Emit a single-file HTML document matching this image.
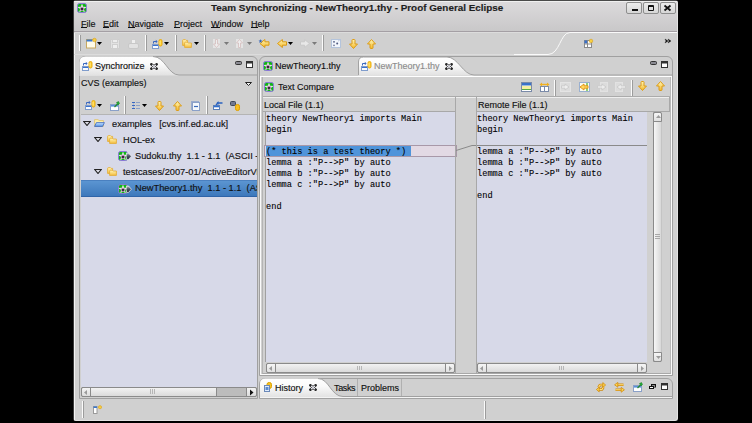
<!DOCTYPE html>
<html><head><meta charset="utf-8">
<style>
*{margin:0;padding:0;box-sizing:border-box}
html,body{width:752px;height:423px;overflow:hidden;background:#000}
body{position:relative;font-family:"Liberation Sans",sans-serif;font-size:9px;color:#111}
.a{position:absolute}
.t{position:absolute;white-space:pre;line-height:12px;-webkit-text-stroke:0.15px currentColor}
.u{position:relative}
.u:after{content:"";position:absolute;left:0;right:0;top:8px;height:1px;background:#111}
.lav{background:#d7d9e8}
.mono{position:absolute;font-family:"Liberation Mono",monospace;font-size:8.67px;line-height:11px;white-space:pre;color:#000;-webkit-text-stroke:0.1px #000}
.sv{position:absolute;width:2px;background:linear-gradient(90deg,#fbfbfb 0,#fbfbfb 1px,#9c9c9c 1px)}
svg.i{position:absolute;overflow:visible}
.hl{position:absolute;height:1px}
.vl{position:absolute;width:1px}
</style></head><body>
<svg width="0" height="0" style="position:absolute">
<defs>
<linearGradient id="gy" x1="0" y1="0" x2="0" y2="1"><stop offset="0" stop-color="#fff7b8"/><stop offset="1" stop-color="#f4b82a"/></linearGradient>
<linearGradient id="gyh" x1="0" y1="0" x2="1" y2="0"><stop offset="0" stop-color="#fff7b8"/><stop offset="1" stop-color="#f4b82a"/></linearGradient>
<linearGradient id="gf" x1="0" y1="0" x2="0" y2="1"><stop offset="0" stop-color="#fff4b8"/><stop offset="1" stop-color="#f6c040"/></linearGradient>
<radialGradient id="gstar" cx="0.5" cy="0.62" r="0.5"><stop offset="0" stop-color="#000"/><stop offset="0.14" stop-color="#301830"/><stop offset="0.4" stop-color="#c0a8c0"/><stop offset="0.7" stop-color="#f4e8f4"/><stop offset="1" stop-color="#fff"/></radialGradient>
<linearGradient id="gbl" x1="0" y1="0" x2="0" y2="1"><stop offset="0" stop-color="#c8e2ff"/><stop offset="1" stop-color="#5a98e8"/></linearGradient>
<linearGradient id="gdia" x1="0" y1="0" x2="0" y2="1"><stop offset="0" stop-color="#b8bcc8"/><stop offset="0.45" stop-color="#505868"/><stop offset="1" stop-color="#1c2030"/></linearGradient>
<linearGradient id="gtab" x1="0" y1="0" x2="0" y2="1"><stop offset="0" stop-color="#ffffff"/><stop offset="0.4" stop-color="#fafafa"/><stop offset="1" stop-color="#e0e0e0"/></linearGradient>
<symbol id="thy" viewBox="0 0 10 10"><rect x="0.5" y="0.5" width="9" height="9" rx="2" fill="#12b418" stroke="#8a78d8"/><path d="M5.00 0.70 L6.18 3.78 L9.47 3.95 L6.90 6.02 L7.76 9.20 L5.00 7.40 L2.24 9.20 L3.10 6.02 L0.53 3.95 L3.82 3.78Z" fill="url(#gstar)"/></symbol>
<symbol id="adn" viewBox="0 0 9 10"><path d="M3 1.2 Q3 0.5 3.7 0.5 H5.3 Q6 0.5 6 1.2 V5 H8.5 L4.5 9.5 L0.5 5 H3Z" fill="url(#gy)" stroke="#dc9c18" stroke-linejoin="round"/></symbol>
<symbol id="aup" viewBox="0 0 9 10"><path d="M3 8.8 Q3 9.5 3.7 9.5 H5.3 Q6 9.5 6 8.8 V5 H8.5 L4.5 0.5 L0.5 5 H3Z" fill="url(#gy)" stroke="#dc9c18" stroke-linejoin="round"/></symbol>
<symbol id="alf" viewBox="0 0 10 9"><path d="M9.5 2.8 V6.2 H5.4 V8.5 L0.5 4.5 L5.4 0.5 V2.8Z" fill="url(#gy)" stroke="#d99a16"/></symbol>
<symbol id="art" viewBox="0 0 10 9"><path d="M0.5 2.8 V6.2 H4.6 V8.5 L9.5 4.5 L4.6 0.5 V2.8Z" fill="#e8e8e8" stroke="#c9c9c9"/></symbol>
<symbol id="dd" viewBox="0 0 5 3"><path d="M0 0 H5 L2.5 3Z" fill="#000"/></symbol>
<symbol id="ddg" viewBox="0 0 5 3"><path d="M0 0 H5 L2.5 3Z" fill="#7a7a7a"/></symbol>
<symbol id="sync" viewBox="0 0 11 10"><path d="M1.5 4.5 V2.5 H4" fill="none" stroke="#3a68c0" stroke-width="1"/><path d="M3.8 0.8 L5.6 2.5 L3.8 4.2Z" fill="#3a68c0"/><rect x="0.5" y="5.5" width="6" height="4" fill="#fafcff" stroke="#7f9ccc"/><rect x="1" y="6" width="5" height="1" fill="#3a72d0"/><rect x="7" y="0.5" width="3" height="6.5" rx="1.4" fill="#ffd23a" stroke="#e8a400" stroke-width="0.9"/><path d="M8 2 V5.5" stroke="#fff6b0" stroke-width="0.7"/></symbol>
<symbol id="xcl" viewBox="0 0 8 7"><path d="M1.3 1.3 L6.7 5.7 M6.7 1.3 L1.3 5.7" stroke="#262626" stroke-width="2.5" stroke-linecap="round"/><path d="M2.4 2.2 L5.6 4.8 M5.6 2.2 L2.4 4.8" stroke="#f2f2fa" stroke-width="1.2" stroke-linecap="round"/></symbol>
<symbol id="vmin" viewBox="0 0 7 4"><rect x="0.5" y="0.5" width="6" height="3" rx="1" fill="#8a8a92" stroke="#333"/></symbol>
<symbol id="vmax" viewBox="0 0 7 7"><rect x="0.5" y="0.5" width="6" height="6" fill="#fff" stroke="#333"/><rect x="0.5" y="0.5" width="6" height="2" fill="#333"/></symbol>
<symbol id="tri" viewBox="0 0 8 5"><path d="M0.8 0.5 H7.2 L4 4.5Z" fill="#dcdce6" stroke="#222" stroke-width="1.1"/></symbol>
<symbol id="fold" viewBox="0 0 10 9"><path d="M0.6 1.6 Q0.6 0.6 1.6 0.6 H3.4 L4.2 1.4 H5.6 V6.4 H0.6Z" fill="url(#gf)" stroke="#e2aa30" stroke-width="0.8"/><path d="M2.6 4.2 Q2.6 3.2 3.6 3.2 H5.4 L6.2 4 H9.4 V8.4 H2.6Z" fill="url(#gf)" stroke="#e2aa30" stroke-width="0.8"/></symbol>
<symbol id="fopen" viewBox="0 0 11 8"><path d="M0.6 0.6 H4 L5 1.5 H9.4 V7.4 H0.6Z" fill="#fff0a8" stroke="#dcc070" stroke-width="0.8"/><path d="M0.6 7.4 L2.4 3.6 H10.4 L8.6 7.4Z" fill="url(#gbl)" stroke="#3a64c0" stroke-width="0.8"/></symbol>
<symbol id="thyx" viewBox="0 0 14 10"><rect x="0.5" y="0.5" width="9" height="9" rx="2" fill="#12b418" stroke="#8a78d8"/><path d="M5.00 0.70 L6.18 3.78 L9.47 3.95 L6.90 6.02 L7.76 9.20 L5.00 7.40 L2.24 9.20 L3.10 6.02 L0.53 3.95 L3.82 3.78Z" fill="url(#gstar)"/><path d="M8.6 2 H10.6 L13.4 5.2 L10.6 8.4 H8.6 Q7.6 5.2 8.6 2Z" fill="url(#gdia)" stroke="#f4f4f8" stroke-width="0.7"/></symbol>
</defs></svg>

<!-- window -->
<div class="a" style="left:73px;top:0;width:605px;height:421px;background:#d0d0d0;border-top:1px solid #4a4a4a;border-left:1px solid #3c3c3c;border-right:1px solid #e2e2e2;border-bottom:1px solid #e2e2e2;border-radius:3px"></div>
<div class="vl" style="left:74px;top:2px;height:418px;background:#f4f4f4"></div>
<!-- title bar -->
<div class="a" style="left:74px;top:1px;width:603px;height:30px;background:linear-gradient(#dcdadc,#c9c8c9)"></div><div class="hl" style="left:74px;top:1px;width:603px;background:#f0f0f0"></div>
<svg class="i" style="left:77px;top:3px" width="10" height="10"><use href="#thy"/></svg>
<div class="t" style="left:211px;top:2px;font-weight:bold;font-size:9.9px;color:#1e1e1e">Team Synchronizing - NewTheory1.thy - Proof General Eclipse</div>
<div class="a" style="left:626px;top:2px;width:16px;height:12px;border:1px solid #8e8e8e;border-radius:2px;background:linear-gradient(#ececec,#d6d6d6)"></div>
<div class="a" style="left:643px;top:2px;width:16px;height:12px;border:1px solid #8e8e8e;border-radius:2px;background:linear-gradient(#ececec,#d6d6d6)"></div>
<div class="a" style="left:660px;top:2px;width:16px;height:12px;border:1px solid #8e8e8e;border-radius:2px;background:linear-gradient(#ececec,#d6d6d6)"></div>
<div class="a" style="left:632px;top:9px;width:6px;height:2px;background:#111"></div>
<div class="a" style="left:648px;top:5px;width:6px;height:6px;border:1px solid #111;border-top-width:2px;border-radius:1px"></div>
<svg class="i" style="left:664px;top:5px" width="7" height="6"><path d="M0.5 0.5 L6.5 5.5 M6.5 0.5 L0.5 5.5" stroke="#111" stroke-width="1.8"/></svg>
<!-- menu -->

<div class="hl" style="left:74px;top:31px;width:603px;background:#a49fa4"></div>
<div class="hl" style="left:74px;top:32px;width:603px;background:#dcdcdc"></div>
<div class="t" style="left:81px;top:18px"><span class="u">F</span>ile</div>
<div class="t" style="left:103px;top:18px"><span class="u">E</span>dit</div>
<div class="t" style="left:128px;top:18px"><span class="u">N</span>avigate</div>
<div class="t" style="left:174px;top:18px"><span class="u">P</span>roject</div>
<div class="t" style="left:211px;top:18px"><span class="u">W</span>indow</div>
<div class="t" style="left:251px;top:18px"><span class="u">H</span>elp</div>

<!-- toolbar -->
<div class="sv" style="left:79px;top:35px;height:16px"></div>
<div class="sv" style="left:145px;top:35px;height:16px"></div>
<div class="sv" style="left:175px;top:35px;height:16px"></div>
<div class="sv" style="left:204px;top:35px;height:16px"></div>
<div class="sv" style="left:322px;top:35px;height:16px"></div>
<svg class="i" style="left:86px;top:38px" width="11" height="11"><rect x="0.5" y="1.5" width="9" height="8.5" fill="#fffbe8" stroke="#c8a860"/><rect x="0.5" y="1.5" width="6" height="2" fill="#3a78d0"/><circle cx="8.5" cy="2" r="1.8" fill="#f8d040" stroke="#d8a020" stroke-width="0.6"/></svg>
<svg class="i" style="left:97px;top:42px" width="5" height="3"><use href="#dd"/></svg>
<svg class="i" style="left:110px;top:39px" width="10" height="10"><rect x="0.5" y="0.5" width="9" height="9" rx="1" fill="#e2e2e2" stroke="#cbcbcb"/><rect x="2.5" y="0.5" width="5" height="3" fill="#ededed" stroke="#cfcfcf"/><rect x="2.5" y="5.5" width="5" height="4" fill="#efefef" stroke="#cfcfcf"/></svg>
<svg class="i" style="left:128px;top:39px" width="11" height="10"><rect x="3.5" y="0.5" width="4" height="4" fill="#efefef" stroke="#cfcfcf"/><rect x="0.5" y="4.5" width="10" height="5" rx="1.5" fill="#e2e2e2" stroke="#c8c8c8"/></svg>
<svg class="i" style="left:152px;top:39px" width="11" height="10"><use href="#sync"/></svg>
<svg class="i" style="left:164px;top:42px" width="5" height="3"><use href="#dd"/></svg>
<svg class="i" style="left:182px;top:39px" width="10" height="9"><use href="#fold"/></svg>
<svg class="i" style="left:194px;top:42px" width="5" height="3"><use href="#dd"/></svg>
<svg class="i" style="left:212px;top:38px" width="9" height="11"><rect x="0.5" y="0.5" width="8" height="10" fill="#e4e4e4" stroke="#d0d0d0"/><path d="M3.5 1.5 V6 H1.5 L4.5 9.5 L7.5 6 H5.5 V1.5Z" fill="#eee" stroke="#d2b8b8" stroke-width="0.7"/></svg>
<svg class="i" style="left:224px;top:42px" width="5" height="3"><use href="#ddg"/></svg>
<svg class="i" style="left:235px;top:38px" width="9" height="11"><rect x="0.5" y="0.5" width="8" height="10" fill="#e4e4e4" stroke="#d0d0d0"/><path d="M3.5 9.5 V5 H1.5 L4.5 1.5 L7.5 5 H5.5 V9.5Z" fill="#eee" stroke="#d2b8b8" stroke-width="0.7"/></svg>
<svg class="i" style="left:247px;top:42px" width="5" height="3"><use href="#ddg"/></svg>
<svg class="i" style="left:259px;top:39px" width="11" height="9"><use href="#alf"/><path d="M1.5 0 L2 1.5 L3.5 1.5 L2.3 2.5 L2.8 4 L1.5 3 L0.2 4 L0.7 2.5 L-0.5 1.5 L1 1.5Z" fill="#2c5fb8"/></svg>
<svg class="i" style="left:277px;top:39px" width="10" height="9"><use href="#alf"/></svg>
<svg class="i" style="left:288px;top:42px" width="5" height="3"><use href="#dd"/></svg>
<svg class="i" style="left:300px;top:39px" width="10" height="9"><use href="#art"/></svg>
<svg class="i" style="left:312px;top:42px" width="5" height="3"><use href="#ddg"/></svg>
<svg class="i" style="left:331px;top:39px" width="10" height="9"><rect x="0.5" y="0.5" width="9" height="8" fill="#f2f6fc" stroke="#b4c4dc"/><circle cx="3" cy="2.8" r="0.9" fill="#505a80"/><circle cx="6.2" cy="4.6" r="1" fill="#505a80"/><circle cx="3" cy="6.4" r="0.8" fill="#6a7090"/><path d="M7 2 L8.5 1.5" stroke="#9aa8c8" stroke-width="0.6"/></svg>
<svg class="i" style="left:349px;top:39px" width="9" height="10"><use href="#adn"/></svg>
<svg class="i" style="left:367px;top:39px" width="9" height="10"><use href="#aup"/></svg>

<div class="hl" style="left:74px;top:54px;width:440px;background:#dcdcdc"></div><svg class="i" style="left:514px;top:31px" width="163" height="25"><path d="M0 23.5 H34 C46 23.5 46 1.5 56 1.5 H163" fill="none" stroke="#fafafa" stroke-width="1"/></svg>
<svg class="i" style="left:584px;top:39px" width="9" height="9"><rect x="0.5" y="1.5" width="7" height="7" fill="#fff" stroke="#8a8a8a"/><rect x="0.5" y="1.5" width="3" height="3" fill="#3a70c8"/><path d="M0.5 5 H7.5 M3.5 1.5 V8.5" stroke="#8a8a8a"/><circle cx="7" cy="2" r="1.8" fill="#f8d040" stroke="#d8a020" stroke-width="0.6"/></svg>
<svg class="i" style="left:665px;top:39px" width="6" height="5"><path d="M0 0 L3 2 L0 4 L1 2Z M3 0 L6 2 L3 4 L4 2Z" fill="#111" stroke="#111" stroke-width="0.4"/></svg>

<div class="a" style="left:79px;top:56px;width:179px;height:343px;border:1px solid #a0a0a0;border-radius:6px 6px 0 0;background:#d0d0d0"></div>
<svg class="i" style="left:79px;top:56px" width="179" height="21"><path d="M0.5 20 V6.5 Q0.5 0.5 6.5 0.5 H74 C86 0.5 89 19 100 19 H179" fill="url(#gtab)" stroke="none"/><path d="M74 0.5 C86 0.5 89 19 100 19 H178" fill="none" stroke="#a0a0a0"/></svg>
<svg class="i" style="left:82px;top:61px" width="11" height="10"><use href="#sync"/></svg>
<div class="t" style="left:95px;top:60px">Synchronize</div>
<svg class="i" style="left:150px;top:63px" width="8" height="7"><use href="#xcl"/></svg>
<svg class="i" style="left:235px;top:61px" width="7" height="4"><use href="#vmin"/></svg>
<svg class="i" style="left:246px;top:61px" width="7" height="7"><use href="#vmax"/></svg>
<div class="t" style="left:81px;top:77px">CVS (examples)</div>
<svg class="i" style="left:245px;top:82px" width="7" height="4"><path d="M0.5 0.5 H6.5 L3.5 3.5Z" fill="#f4f4f4" stroke="#222"/></svg>
<!-- view toolbar -->
<svg class="i" style="left:85px;top:100px" width="11" height="10"><use href="#sync"/></svg>
<svg class="i" style="left:97px;top:104px" width="5" height="3"><use href="#dd"/></svg>
<svg class="i" style="left:110px;top:101px" width="10" height="10"><rect x="0.5" y="3.5" width="8" height="6" fill="#fff" stroke="#8aa0c8"/><rect x="1" y="4" width="7" height="1.6" fill="#5a90d8"/><path d="M4.5 6 L7.5 3" stroke="#2a8a30" stroke-width="1.2"/><path d="M6.5 1.5 L8.5 0.5 L9.5 2.5 L8 4Z" fill="#22aa33" stroke="#167a22" stroke-width="0.5"/></svg>
<div class="sv" style="left:124px;top:96px;height:18px"></div>
<svg class="i" style="left:132px;top:101px" width="8" height="9"><path d="M1.5 1 V8" stroke="#a8b8d8"/><path d="M0 1.5 H3 M0 4.5 H3 M0 7.5 H3" stroke="#3a68c0"/><path d="M4 1.5 H8 M4 4.5 H8 M4 7.5 H8" stroke="#8aa0c8"/></svg>
<svg class="i" style="left:142px;top:104px" width="5" height="3"><use href="#dd"/></svg>
<svg class="i" style="left:155px;top:101px" width="9" height="10"><use href="#adn"/></svg>
<svg class="i" style="left:173px;top:101px" width="9" height="10"><use href="#aup"/></svg>
<svg class="i" style="left:191px;top:101px" width="9" height="10"><rect x="0.5" y="0.5" width="7" height="8" fill="#e8eef8" stroke="#9aaccc"/><rect x="1.5" y="1.5" width="7" height="8" fill="#f4f8fc" stroke="#8aa0c8"/><path d="M3 5.5 H7" stroke="#3a6ab8" stroke-width="1.2"/></svg>
<div class="sv" style="left:206px;top:96px;height:18px"></div>
<svg class="i" style="left:213px;top:101px" width="10" height="9"><rect x="0.5" y="4.5" width="6" height="4" fill="#fff" stroke="#5a7fb8"/><rect x="1" y="5" width="5" height="1.3" fill="#2f6fd0"/><path d="M3 4 L5 2 H9.5" stroke="#2a62c0" stroke-width="1.4" fill="none"/><path d="M5.5 0 L3.5 2 L5.5 4Z" fill="#2a62c0"/></svg>
<svg class="i" style="left:230px;top:101px" width="10" height="10"><rect x="0.5" y="0.5" width="5" height="4" rx="1" fill="#707890" stroke="#404858"/><rect x="5.5" y="3.5" width="4" height="6" rx="1.8" fill="#f8c020" stroke="#e0a000"/></svg>
<!-- tree -->
<div class="hl" style="left:81px;top:114px;width:176px;background:#b4b4b4"></div>
<div class="a lav" style="left:81px;top:115px;width:176px;height:272px"></div>
<div class="a" style="left:0;top:0;width:257px;height:387px;overflow:hidden">
<svg class="i" style="left:83px;top:121px" width="8" height="5"><use href="#tri"/></svg>
<svg class="i" style="left:94px;top:119px" width="11" height="8"><use href="#fopen"/></svg>
<div class="t" style="left:112px;top:118px;font-size:9.25px">examples   [cvs.inf.ed.ac.uk]</div>
<svg class="i" style="left:94px;top:137px" width="8" height="5"><use href="#tri"/></svg>
<svg class="i" style="left:107px;top:135px" width="10" height="9"><use href="#fold"/></svg>
<div class="t" style="left:123px;top:134px;font-size:9.25px">HOL-ex</div>
<svg class="i" style="left:118px;top:151px" width="14" height="10"><use href="#thyx"/></svg>
<div class="t" style="left:135px;top:150px;font-size:9.25px">Sudoku.thy  1.1 - 1.1  (ASCII -kkb)</div>
<svg class="i" style="left:94px;top:169px" width="8" height="5"><use href="#tri"/></svg>
<svg class="i" style="left:107px;top:167px" width="10" height="9"><use href="#fold"/></svg>
<div class="t" style="left:123px;top:166px;font-size:9.25px">testcases/2007-01/ActiveEditorView</div>
<div class="a" style="left:81px;top:180px;width:176px;height:17px;background:linear-gradient(#5b95d2,#3d78bb);border-top:1px solid #4a80c0;border-bottom:1px solid #2f64a8"></div>
<svg class="i" style="left:118px;top:184px" width="14" height="10"><use href="#thyx"/></svg>
<div class="t" style="left:135px;top:182px;font-size:9.25px">NewTheory1.thy  1.1 - 1.1  (ASCII -kkb)</div>
</div>

<!-- sync h scrollbar -->
<div class="a" style="left:81px;top:387px;width:176px;height:10px;background:#bcbcbc;border:1px solid #8a8a8a;border-radius:2px"></div>
<div class="a" style="left:81px;top:387px;width:10px;height:10px;background:linear-gradient(#f4f4f4,#dcdcdc);border:1px solid #8a8a8a;border-radius:2px 0 0 2px"></div>
<svg class="i" style="left:84px;top:390px" width="3" height="5"><path d="M3 0 V5 L0 2.5Z" fill="#9a9a9a"/></svg>
<div class="a" style="left:90px;top:387px;width:127px;height:10px;background:linear-gradient(#f2f2f2,#dadada);border:1px solid #8a8a8a"></div>
<div class="a" style="left:150px;top:389px;width:5px;height:5px;border-left:1px solid #b6b6b6;border-right:1px solid #b6b6b6"></div>
<div class="vl" style="left:152px;top:389px;height:5px;background:#b6b6b6"></div>
<div class="a" style="left:246px;top:387px;width:11px;height:10px;background:linear-gradient(#f4f4f4,#dcdcdc);border:1px solid #8a8a8a;border-radius:0 2px 2px 0"></div>
<svg class="i" style="left:250px;top:389px" width="4" height="7"><path d="M0 0.5 V6.5 L3.5 3.5Z" fill="#111"/></svg>

<div class="a" style="left:259px;top:56px;width:414px;height:320px;border:1px solid #a0a0a0;border-radius:6px 6px 0 0;background:#d0d0d0"></div>
<div class="a" style="left:260px;top:76px;width:412px;height:299px;border:1px solid #fafafa;border-top-color:#fff"></div>
<svg class="i" style="left:259px;top:56px" width="414" height="22"><path d="M99.5 20 V6 Q99.5 1 104.5 1 H188 C199 1 204 19 215 19 H413" fill="url(#gtab)" stroke="none"/><path d="M99.5 19 V6 Q99.5 1 104.5 1 H188 C199 1 204 19 215 19 H413" fill="none" stroke="#a2a2a2"/><path d="M1 20.5 H413" stroke="#ffffff"/></svg>
<svg class="i" style="left:263px;top:61px" width="10" height="10"><use href="#thy"/></svg>
<div class="t" style="left:275px;top:60px">NewTheory1.thy</div>
<svg class="i" style="left:361px;top:61px" width="11" height="10"><use href="#sync"/></svg>
<div class="t" style="left:374px;top:60px;color:#8c8c8c">NewTheory1.thy</div>
<svg class="i" style="left:445px;top:63px" width="8" height="7"><use href="#xcl"/></svg>
<svg class="i" style="left:650px;top:61px" width="7" height="4"><use href="#vmin"/></svg>
<svg class="i" style="left:661px;top:61px" width="7" height="7"><use href="#vmax"/></svg>
<!-- compare panel -->
<div class="a" style="left:262px;top:77px;width:409px;height:297px;border-left:1px solid #b4b4b4;border-right:1px solid #b8b8b8;border-bottom:1px solid #a8a8a8"></div>
<svg class="i" style="left:264px;top:82px" width="10" height="10"><use href="#thy"/></svg>
<div class="t" style="left:278px;top:81px">Text Compare</div>
<svg class="i" style="left:521px;top:82px" width="11" height="10"><rect x="0.5" y="0.5" width="10" height="9" fill="#fff" stroke="#7a8aa8"/><rect x="1" y="1" width="9" height="2.5" fill="#3a72c8"/><rect x="1" y="4" width="9" height="3" fill="#f6f0a0"/><path d="M1 7.5 H10" stroke="#55aa44"/></svg>
<svg class="i" style="left:539px;top:82px" width="11" height="10"><rect x="1.5" y="4.5" width="8" height="5" fill="#fff" stroke="#7a8aa8"/><path d="M5.5 4.5 V9.5" stroke="#7a8aa8"/><path d="M0.5 2.5 L3 0.5 V4.5Z M10.5 2.5 L8 0.5 V4.5Z" fill="#f0b020"/><path d="M2.5 2.5 H8.5" stroke="#f0b020" stroke-width="1.4"/></svg>
<div class="sv" style="left:554px;top:80px;height:16px"></div>
<svg class="i" style="left:560px;top:82px" width="11" height="10"><rect x="0.5" y="0.5" width="10" height="9" fill="#dcdcdc" stroke="#e4e4e4"/><path d="M1.5 3.8 H5 V2 L9 5 L5 8 V6.2 H1.5Z" fill="#eeeeee" stroke="#c6c6c6" stroke-width="0.8"/></svg>
<svg class="i" style="left:579px;top:82px" width="11" height="10"><rect x="0.5" y="0.5" width="10" height="9" fill="#fbfbf0" stroke="#9ab0d0"/><path d="M8 1 V9" stroke="#66bb44" stroke-width="1.4"/><path d="M9 3.8 H5 V2 L1 5 L5 8 V6.2 H9Z" fill="#ffd860" stroke="#e09010" stroke-width="0.9"/></svg>
<svg class="i" style="left:597px;top:82px" width="11" height="10"><rect x="3.5" y="0.5" width="7" height="9" fill="#dcdcdc" stroke="#e2e2e2"/><path d="M0.5 3.8 H5 V2 L9 5 L5 8 V6.2 H0.5Z" fill="#ececec" stroke="#c8c8c8" stroke-width="0.8"/></svg>
<svg class="i" style="left:615px;top:82px" width="11" height="10"><rect x="0.5" y="0.5" width="7" height="9" fill="#dcdcdc" stroke="#e2e2e2"/><path d="M10.5 3.8 H6 V2 L2 5 L6 8 V6.2 H10.5Z" fill="#ececec" stroke="#c8c8c8" stroke-width="0.8"/></svg>
<div class="sv" style="left:631px;top:80px;height:16px"></div>
<svg class="i" style="left:638px;top:81px" width="9" height="10"><use href="#adn"/></svg>
<svg class="i" style="left:656px;top:81px" width="9" height="10"><use href="#aup"/></svg>
<div class="hl" style="left:263px;top:96px;width:407px;background:#ababab"></div>
<div class="hl" style="left:263px;top:97px;width:407px;background:#eeeeee"></div>
<!-- left pane -->
<div class="a" style="left:263px;top:97px;width:193px;height:15px;border-right:1px solid #a8a8a8;border-bottom:1px solid #a8a8a8"></div>
<div class="t" style="left:264px;top:99px">Local File (1.1)</div>
<div class="vl" style="left:265px;top:112px;height:250px;background:#a0a0a0"></div>
<div class="a lav" style="left:266px;top:112px;width:189px;height:250px"></div>
<div class="a" style="left:264px;top:145px;width:193px;height:12px;background:#e2d9e4;border:1px solid #a898a8"></div>
<div class="a" style="left:266px;top:146px;width:145px;height:10px;background:#4f94da"></div>
<div class="mono" style="left:266px;top:114px">theory NewTheory1 imports Main
begin

(* this is a test theory *)
lemma a :"P--&gt;P" by auto
lemma b :"P--&gt;P" by auto
lemma c :"P--&gt;P" by auto

end</div>
<div class="vl" style="left:455px;top:112px;height:262px;background:#a8a8a8"></div>
<!-- left h scrollbar -->
<div class="a" style="left:266px;top:363px;width:189px;height:10px;background:linear-gradient(#f2f2f2,#dadada);border:1px solid #8a8a8a;border-radius:2px"></div>
<div class="a" style="left:266px;top:363px;width:10px;height:10px;border:1px solid #8a8a8a;border-radius:2px 0 0 2px;background:linear-gradient(#f6f6f6,#e0e0e0)"></div>
<svg class="i" style="left:269px;top:366px" width="3" height="5"><path d="M3 0 V5 L0 2.5Z" fill="#9a9a9a"/></svg>
<div class="a" style="left:445px;top:363px;width:10px;height:10px;border:1px solid #8a8a8a;border-radius:0 2px 2px 0;background:linear-gradient(#f6f6f6,#e0e0e0)"></div>
<svg class="i" style="left:449px;top:366px" width="3" height="5"><path d="M0 0 V5 L3 2.5Z" fill="#9a9a9a"/></svg>
<div class="a" style="left:357px;top:366px;width:5px;height:4px;border-left:1px solid #b6b6b6;border-right:1px solid #b6b6b6"></div>
<div class="vl" style="left:359px;top:366px;height:4px;background:#b6b6b6"></div>
<!-- gutter -->
<svg class="i" style="left:456px;top:140px" width="21" height="15"><path d="M0 10.5 L16 5.5 H21" fill="none" stroke="#8a8a8a"/></svg>
<div class="vl" style="left:476px;top:97px;height:277px;background:#a8a8a8"></div>
<!-- right pane -->
<div class="a" style="left:477px;top:97px;width:193px;height:15px;border-bottom:1px solid #a8a8a8;border-right:1px solid #a8a8a8"></div>
<div class="t" style="left:478px;top:99px">Remote File (1.1)</div>
<div class="a lav" style="left:477px;top:112px;width:170px;height:250px"></div>
<div class="hl" style="left:477px;top:145px;width:170px;background:#8a8a8a"></div>
<div class="mono" style="left:477px;top:114px">theory NewTheory1 imports Main
begin

lemma a :"P--&gt;P" by auto
lemma b :"P--&gt;P" by auto
lemma c :"P--&gt;P" by auto

end</div>
<!-- right v scrollbar -->
<div class="a" style="left:653px;top:112px;width:9px;height:250px;background:linear-gradient(90deg,#f6f6f6,#d8d8d8);border:1px solid #8a8a8a;border-right-color:#c4c4c4;border-radius:2px"></div>
<div class="a" style="left:653px;top:112px;width:9px;height:10px;border:1px solid #8a8a8a;border-radius:2px 2px 0 0;background:linear-gradient(#f6f6f6,#e0e0e0)"></div>
<svg class="i" style="left:656px;top:115px" width="5" height="3"><path d="M0 3 H5 L2.5 0Z" fill="#9a9a9a"/></svg>
<div class="a" style="left:653px;top:352px;width:9px;height:10px;border:1px solid #8a8a8a;border-radius:0 0 2px 2px;background:linear-gradient(#f6f6f6,#e0e0e0)"></div>
<svg class="i" style="left:656px;top:356px" width="5" height="3"><path d="M0 0 H5 L2.5 3Z" fill="#9a9a9a"/></svg>
<div class="a" style="left:655px;top:234px;width:5px;height:5px;border-top:1px solid #a8a8a8;border-bottom:1px solid #a8a8a8"></div><div class="hl" style="left:655px;top:236px;width:5px;background:#a8a8a8"></div>
<!-- right h scrollbar -->
<div class="a" style="left:477px;top:363px;width:170px;height:10px;background:linear-gradient(#f2f2f2,#dadada);border:1px solid #8a8a8a;border-radius:2px"></div>
<div class="a" style="left:477px;top:363px;width:10px;height:10px;border:1px solid #8a8a8a;border-radius:2px 0 0 2px;background:linear-gradient(#f6f6f6,#e0e0e0)"></div>
<svg class="i" style="left:480px;top:366px" width="3" height="5"><path d="M3 0 V5 L0 2.5Z" fill="#9a9a9a"/></svg>
<div class="a" style="left:637px;top:363px;width:10px;height:10px;border:1px solid #8a8a8a;border-radius:0 2px 2px 0;background:linear-gradient(#f6f6f6,#e0e0e0)"></div>
<svg class="i" style="left:641px;top:366px" width="3" height="5"><path d="M0 0 V5 L3 2.5Z" fill="#9a9a9a"/></svg>
<div class="a" style="left:559px;top:366px;width:5px;height:4px;border-left:1px solid #b6b6b6;border-right:1px solid #b6b6b6"></div>
<div class="vl" style="left:561px;top:366px;height:4px;background:#b6b6b6"></div>

<div class="a" style="left:259px;top:378px;width:414px;height:21px;border:1px solid #a2a2a2;border-radius:6px 6px 0 0;background:#d0d0d0"></div>
<svg class="i" style="left:259px;top:378px" width="414" height="21"><path d="M1 20 V6 Q1 0.5 6.5 0.5 H59 C70 0.5 72 18.5 84 18.5 H413" fill="url(#gtab)" stroke="none"/><path d="M59 0.5 C70 0.5 72 18.5 84 18.5 H413" fill="none" stroke="#a0a0a0"/><path d="M1 19.5 H413" stroke="#f4f4f4"/></svg>
<svg class="i" style="left:264px;top:382px" width="8" height="10"><rect x="3" y="0.5" width="4.5" height="6" rx="2" fill="#f8c020" stroke="#d8a000"/><rect x="0.5" y="3.5" width="5" height="6" fill="#e0ecfc" stroke="#6a88b8"/><rect x="1.5" y="5" width="3" height="3" fill="#5a8ad0"/></svg>
<div class="t" style="left:275px;top:382px">History</div>
<svg class="i" style="left:309px;top:384px" width="8" height="7"><use href="#xcl"/></svg>
<div class="t" style="left:334px;top:382px;letter-spacing:-0.35px">Tasks</div>
<div class="vl" style="left:357px;top:379px;height:17px;background:#b0b0b0"></div>
<div class="t" style="left:361px;top:382px">Problems</div>
<div class="vl" style="left:401px;top:379px;height:17px;background:#b0b0b0"></div>
<svg class="i" style="left:596px;top:382px" width="10" height="11"><path d="M2.5 5.5 L4 3 H7 M7.5 5 L6 7.5 H3" fill="none" stroke="#d08a10" stroke-width="2.6" stroke-linejoin="round"/><path d="M2.5 5.5 L4 3 H7 M7.5 5 L6 7.5 H3" fill="none" stroke="#ffe27a" stroke-width="1.1" stroke-linejoin="round"/><path d="M6.8 0.6 L9.6 3 L6.8 5.4Z M3.2 5.1 L0.4 7.5 L3.2 9.9Z" fill="#ffd850" stroke="#d08a10" stroke-width="0.8" stroke-linejoin="round"/></svg>
<svg class="i" style="left:614px;top:382px" width="11" height="11"><path d="M3.5 2.8 H9.5 M1.5 7.8 H7.5" fill="none" stroke="#d08a10" stroke-width="2.6"/><path d="M3.5 2.8 H9.5 M1.5 7.8 H7.5" fill="none" stroke="#ffe27a" stroke-width="1.1"/><path d="M3.8 0.4 L0.6 2.8 L3.8 5.2Z M7.2 5.4 L10.4 7.8 L7.2 10.2Z" fill="#ffd850" stroke="#d08a10" stroke-width="0.8" stroke-linejoin="round"/></svg>
<svg class="i" style="left:633px;top:382px" width="10" height="10"><rect x="0.5" y="3.5" width="8" height="6" fill="#fff" stroke="#8aa0c8"/><rect x="1" y="4" width="7" height="1.6" fill="#5a90d8"/><path d="M4.5 6 L7.5 3" stroke="#2a8a30" stroke-width="1.2"/><path d="M6.5 1.5 L8.5 0.5 L9.5 2.5 L8 4Z" fill="#22aa33" stroke="#167a22" stroke-width="0.5"/></svg>
<svg class="i" style="left:649px;top:384px" width="7" height="5"><rect x="2.5" y="0.5" width="4" height="2.5" fill="#fff" stroke="#111"/><rect x="2.5" y="0.5" width="4" height="1" fill="#111"/><rect x="0.5" y="2.5" width="4" height="2" fill="#fff" stroke="#111"/></svg>
<svg class="i" style="left:661px;top:383px" width="7" height="7"><rect x="0.5" y="0.5" width="6" height="6" fill="#fff" stroke="#333"/><rect x="0.5" y="0.5" width="6" height="2" fill="#333"/></svg>
<!-- status bar -->
<div class="sv" style="left:82px;top:401px;height:17px"></div>
<svg class="i" style="left:93px;top:405px" width="9" height="9"><rect x="0.5" y="1.5" width="3.5" height="7" fill="#fff" stroke="#9a9a9a"/><rect x="0.5" y="1.5" width="3.5" height="1.5" fill="#3a78d0"/><circle cx="7" cy="2.2" r="1.6" fill="#f8d040" stroke="#d8a020" stroke-width="0.6"/></svg>
<div class="sv" style="left:484px;top:401px;height:18px"></div>
</body></html>
